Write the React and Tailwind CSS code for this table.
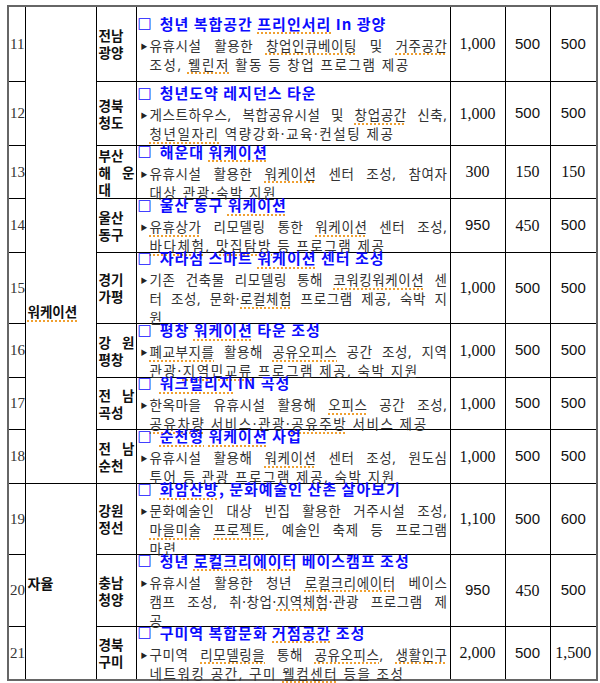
const rows = [
  {
    no: 11, region: ['전남', '광양'], hc: 'h-[74px]',
    title: '청년 복합공간 {프리인서리} In 광양',
    body: ['유휴시설 활용한 {창업인큐베이팅} 및 {거주공간}', '조성, {웰린저} 활동 등 창업 프로그램 제공'],
    nums: ['1,000', '500', '500'],
  },
  {
    no: 12, region: ['경북', '청도'], hc: 'h-[63px]',
    title: '청년도약 레지던스 타운',
    body: ['게스트하우스, 복합공유시설 및 {창업공간} 신축,', '{청년일자리} 역량강화·교육·컨설팅 제공'],
    nums: ['1,000', '500', '500'],
  },
  {
    no: 13, region: ['부산', '해 운', '대'], hc: 'h-[52px]',
    title: '해운대 {워케이션}',
    body: ['유휴시설 활용한 {워케이션} 센터 조성, 참여자', '대상 관광·숙박 지원'],
    nums: ['300', '150', '150'],
  },
  {
    no: 14, region: ['울산', '동구'], hc: 'h-[53px]',
    title: '울산 동구 {워케이션}',
    body: ['{유휴상가} 리모델링 통한 {워케이션} 센터 조성,', '{바다체험}, {맛집탐방} 등 프로그램 제공'],
    nums: ['950', '450', '500'],
  },
  {
    no: 15, region: ['경기', '가평'], hc: 'h-[70px]',
    title: '자라섬 스마트 {워케이션} 센터 조성',
    body: ['기존 건축물 리모델링 통해 {코워킹워케이션} 센', '터 조성, 문화·{로컬체험} 프로그램 제공, 숙박 지', '원'],
    nums: ['1,000', '500', '500'],
  },
  {
    no: 16, region: ['강 원', '평창'], hc: 'h-[53px]',
    title: '평창 {워케이션} 타운 조성',
    body: ['{폐교부지를} 활용해 {공유오피스} 공간 조성, 지역', '관광·{지역민교류} 프로그램 제공, 숙박 지원'],
    nums: ['1,000', '500', '500'],
  },
  {
    no: 17, region: ['전 남', '곡성'], hc: 'h-[51px]',
    title: '{워크빌리지} IN 곡성',
    body: ['한옥마을 유휴시설 활용해 {오피스} 공간 조성,', '{공유차량} 서비스·관광·{공유주방} 서비스 제공'],
    nums: ['1,000', '500', '500'],
  },
  {
    no: 18, region: ['전 남', '순천'], hc: 'h-[53px]',
    title: '{순천형} {워케이션} 사업',
    body: ['유휴시설 활용해 {워케이션} 센터 조성, 원도심', '투어 등 관광 프로그램 제공, 숙박 지원'],
    nums: ['1,000', '500', '500'],
  },
  {
    no: 19, region: ['강원', '정선'], hc: 'h-[70px]',
    title: '{화암산방}, 문화예술인 산촌 살아보기',
    body: ['문화예술인 대상 빈집 활용한 거주시설 조성,', '{마을미술} {프로젝트}, 예술인 축제 등 프로그램', '마련'],
    nums: ['1,100', '500', '600'],
  },
  {
    no: 20, region: ['충남', '청양'], hc: 'h-[71px]',
    title: '청년 {로컬크리에이터} 베이스캠프 조성',
    body: ['유휴시설 활용한 청년 {로컬크리에이터} 베이스', '캠프 조성, 취·창업·{지역체험}·관광 프로그램 제', '공'],
    nums: ['950', '450', '500'],
  },
  {
    no: 21, region: ['경북', '구미'], hc: 'h-[52px]',
    title: '구미역 복합문화 {거점공간} 조성',
    body: ['구미역 {리모델링을} 통해 {공유오피스}, {생활인구}', '네트워킹 공간, 구미 {웰컴센터} 등을 조성'],
    nums: ['2,000', '500', '1,500'],
  },
];

// these values are drawn in a sans face in the source document, the rest in serif
const sansNums = ['500', '600', '950'];

function Marked({ text }) {
  const parts = text.split(/(\{[^}]+\})/);
  return parts.map((p, i) =>
    p.startsWith('{') ? (
      <span
        key={i}
        className="underline decoration-dotted decoration-[#f0a030] decoration-[1.5px] underline-offset-[3px]"
      >
        {p.slice(1, -1)}
      </span>
    ) : (
      <span key={i}>{p}</span>
    )
  );
}

function Region({ lines }) {
  return (
    <div className="flex flex-col pl-[2px] pr-[1px] text-[13.5px] font-bold leading-[17px] text-[#111]">
      {lines.map((l, i) =>
        l.includes(' ') ? (
          <div key={i} className="flex justify-between">
            {l.split(' ').map((c, j) => (
              <span key={j}>{c}</span>
            ))}
          </div>
        ) : (
          <div key={i}>{l}</div>
        )
      )}
    </div>
  );
}

function Content({ r }) {
  return (
    <div className={`${r.hc} flex flex-col justify-center overflow-visible pr-[2px]`}>
      <div className="mb-[3px] flex items-center whitespace-nowrap pl-[1px] text-[15px] font-bold leading-[20px] tracking-[1px] text-[#0c0cff]">
        <span className="mr-[8px] font-['DejaVu_Sans',sans-serif] text-[15px] leading-[15px] tracking-normal">□</span>
        <span>
          <Marked text={r.title} />
        </span>
      </div>
      <div className="flex font-['Noto_Sans','Noto_Sans_CJK_KR',sans-serif] text-[13.5px] leading-[19px] text-[#333]">
        <span className="w-[13px] shrink-0 pl-[4px] text-[7px] text-[#222]">▶</span>
        <div className="flex-1">
          {r.body.map((line, i) => (
            <div
              key={i}
              className={
                i < r.body.length - 1
                  ? 'text-justify tracking-[0.6px] [text-align-last:justify]'
                  : 'whitespace-nowrap tracking-[1.6px]'
              }
            >
              <Marked text={line} />
            </div>
          ))}
        </div>
      </div>
    </div>
  );
}

function Row({ r, idx }) {
  return (
    <tr>
      <td className="border border-black p-0 pl-[1px] align-middle font-['Liberation_Serif',serif] text-[15px] text-[#333]">
        {r.no}
      </td>
      {idx === 0 && (
        <td className="border border-black p-0 pl-[2px] pt-[291px] align-top" rowSpan={8}>
          <span className="text-[13.5px] font-bold text-[#111] underline decoration-dotted decoration-[#f0a030] decoration-[1.5px] underline-offset-[3px]">
            워케이션
          </span>
        </td>
      )}
      {idx === 8 && (
        <td className="border border-black p-0 pl-[2px] align-middle" rowSpan={3}>
          <span className="text-[14px] font-bold text-[#111]">자율</span>
        </td>
      )}
      <td className="border border-black p-0 align-middle">
        <Region lines={r.region} />
      </td>
      <td className="border border-black p-0 align-top">
        <Content r={r} />
      </td>
      {r.nums.map((n, i) => (
        <td
          key={i}
          className={
            sansNums.includes(n)
              ? "border border-black p-0 text-center align-middle font-['Liberation_Sans',sans-serif] text-[15px] text-[#111]"
              : "border border-black p-0 text-center align-middle font-['Liberation_Serif',serif] text-[16px] text-[#111]"
          }
        >
          {n}
        </td>
      ))}
    </tr>
  );
}

export default function App() {
  return (
    <div className="h-[683px] overflow-hidden bg-white pl-[7px] pt-[5px] font-['Noto_Sans_CJK_KR','Noto_Sans',sans-serif]">
      <table className="w-[589px] table-fixed border-collapse border-2 border-[#666]">
        <colgroup>
          <col className="w-[17px]" />
          <col className="w-[71px]" />
          <col className="w-[40px]" />
          <col className="w-[314px]" />
          <col className="w-[55px]" />
          <col className="w-[45px]" />
          <col className="w-[47px]" />
        </colgroup>
        <tbody>
          {rows.map((r, idx) => (
            <Row key={r.no} r={r} idx={idx} />
          ))}
        </tbody>
      </table>
    </div>
  );
}
